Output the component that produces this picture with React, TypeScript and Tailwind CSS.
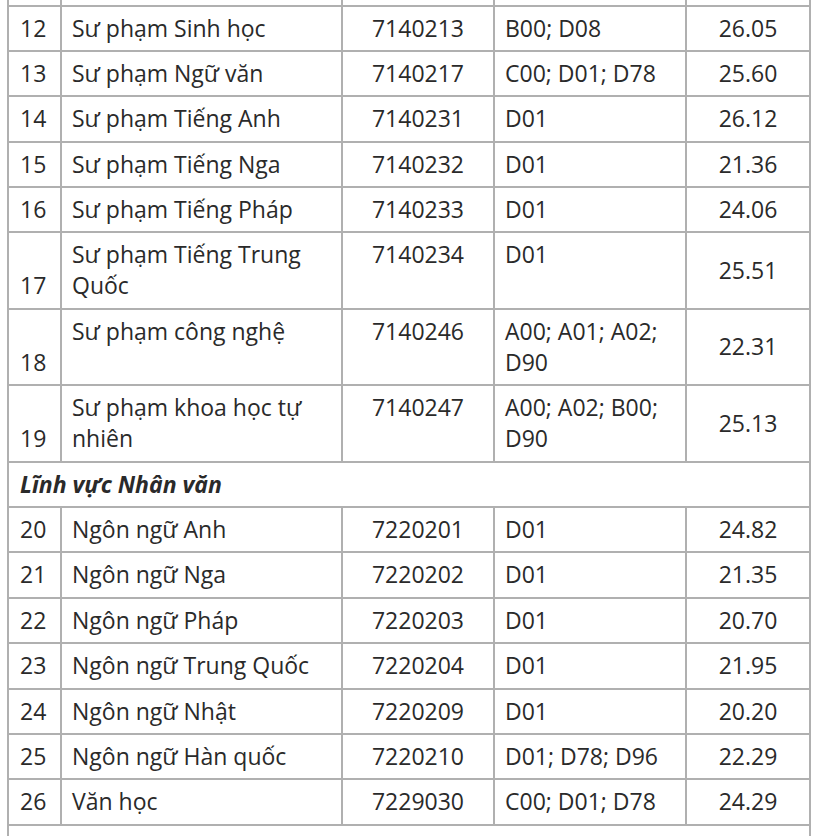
type Row = {
  no: string;
  name: string;
  code: string;
  combo: string;
  score: string;
  tall?: boolean;
};

const teacherRows: Row[] = [
  { no: '12', name: 'Sư phạm Sinh học', code: '7140213', combo: 'B00; D08', score: '26.05' },
  { no: '13', name: 'Sư phạm Ngữ văn', code: '7140217', combo: 'C00; D01; D78', score: '25.60' },
  { no: '14', name: 'Sư phạm Tiếng Anh', code: '7140231', combo: 'D01', score: '26.12' },
  { no: '15', name: 'Sư phạm Tiếng Nga', code: '7140232', combo: 'D01', score: '21.36' },
  { no: '16', name: 'Sư phạm Tiếng Pháp', code: '7140233', combo: 'D01', score: '24.06' },
  { no: '17', name: 'Sư phạm Tiếng Trung Quốc', code: '7140234', combo: 'D01', score: '25.51', tall: true },
  { no: '18', name: 'Sư phạm công nghệ', code: '7140246', combo: 'A00; A01; A02; D90', score: '22.31', tall: true },
  { no: '19', name: 'Sư phạm khoa học tự nhiên', code: '7140247', combo: 'A00; A02; B00; D90', score: '25.13', tall: true },
];

const humanitiesRows: Row[] = [
  { no: '20', name: 'Ngôn ngữ Anh', code: '7220201', combo: 'D01', score: '24.82' },
  { no: '21', name: 'Ngôn ngữ Nga', code: '7220202', combo: 'D01', score: '21.35' },
  { no: '22', name: 'Ngôn ngữ Pháp', code: '7220203', combo: 'D01', score: '20.70' },
  { no: '23', name: 'Ngôn ngữ Trung Quốc', code: '7220204', combo: 'D01', score: '21.95' },
  { no: '24', name: 'Ngôn ngữ Nhật', code: '7220209', combo: 'D01', score: '20.20' },
  { no: '25', name: 'Ngôn ngữ Hàn quốc', code: '7220210', combo: 'D01; D78; D96', score: '22.29' },
  { no: '26', name: 'Văn học', code: '7229030', combo: 'C00; D01; D78', score: '24.29' },
];

const cell = 'border-2 border-[#b0b0b0] pt-[6px] pb-[6.4px] px-[10px]';

function ScoreRow({ row }: { row: Row }) {
  // tall rows: number sits on the last line, code/combo hang from the top
  const top = row.tall ? 'align-top' : 'align-middle';
  return (
    <tr>
      <td className={`${cell} ${row.tall ? 'align-bottom' : 'align-middle'} pl-[11px]`}>{row.no}</td>
      <td className={`${cell} ${top}`}>{row.name}</td>
      <td className={`${cell} ${top} text-center`}>{row.code}</td>
      <td className={`${cell} ${top}`}>{row.combo}</td>
      <td className={`${cell} align-middle text-center`}>{row.score}</td>
    </tr>
  );
}

export default function App() {
  return (
    <div className="h-[836px] w-[820px] overflow-hidden bg-white">
      <table
        className="ml-[7px] w-[804px] table-fixed border-collapse text-[23px] leading-[31px] text-[#2a2a2a]"
        style={{ fontFamily: '"Open Sans", "Noto Sans", Arial, sans-serif' }}
      >
        <colgroup>
          <col className="w-[53px]" />
          <col className="w-[281px]" />
          <col className="w-[152px]" />
          <col className="w-[192px]" />
          <col className="w-[124px]" />
        </colgroup>
        <tbody>
          {/* tail of the row above, cut off by the top edge */}
          <tr className="h-[5.5px]">
            <td className="border-2 border-t-0 border-[#b0b0b0] p-0" />
            <td className="border-2 border-t-0 border-[#b0b0b0] p-0" />
            <td className="border-2 border-t-0 border-[#b0b0b0] p-0" />
            <td className="border-2 border-t-0 border-[#b0b0b0] p-0" />
            <td className="border-2 border-t-0 border-[#b0b0b0] p-0" />
          </tr>
          {teacherRows.map((r) => (
            <ScoreRow key={r.no} row={r} />
          ))}
          <tr>
            <td colSpan={5} className={`${cell} pl-[11px] font-bold italic`}>
              Lĩnh vực Nhân văn
            </td>
          </tr>
          {humanitiesRows.map((r) => (
            <ScoreRow key={r.no} row={r} />
          ))}
          <tr>
            <td colSpan={5} className={`${cell} font-bold italic`}>
              &nbsp;
            </td>
          </tr>
        </tbody>
      </table>
    </div>
  );
}
